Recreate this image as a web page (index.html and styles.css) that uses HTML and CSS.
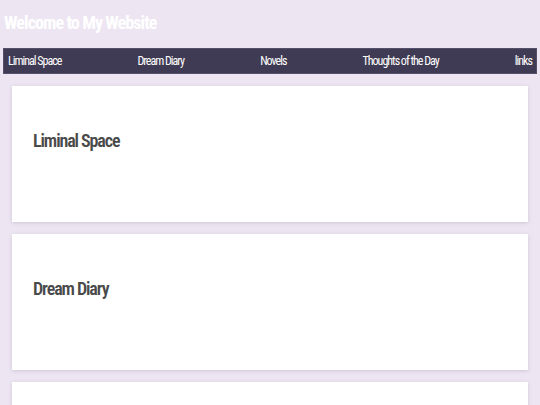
FILE: index.html
```html
<!DOCTYPE html>
<html>
<head>
<meta charset="utf-8">
<link rel="stylesheet" href="styles.css">
</head>
<body>
<header class="site-header">
  <h1 class="site-title">Welcome to My Website</h1>
</header>
<nav class="main-nav">
  <a href="#">Liminal Space</a>
  <a href="#">Dream Diary</a>
  <a href="#">Novels</a>
  <a href="#">Thoughts of the Day</a>
  <a href="#">links</a>
</nav>
<main class="sections">
  <section class="card"><h2 class="card-title">Liminal Space</h2></section>
  <section class="card"><h2 class="card-title">Dream Diary</h2></section>
  <section class="card"><h2 class="card-title">Novels</h2></section>
</main>
</body>
</html>
```
FILE: styles.css
```css
html, body {
  margin: 0;
  padding: 0;
}
body {
  background: #ede6f2;
  font-family: Roboto, "Liberation Sans", sans-serif;
  font-stretch: 75%;
  padding: 0 3px;
  height: 405px;
  overflow: hidden;
}
.site-header {
  height: 48px;
  display: flex;
  align-items: center;
}
.site-title {
  margin: 0 0 2px 1px;
  font-size: 18px;
  line-height: 20px;
  font-weight: bold;
  color: #ffffff;
  letter-spacing: -0.9px;
}
.main-nav {
  display: flex;
  justify-content: space-between;
  align-items: center;
  height: 24px;
  background: #3f3b54;
  border: 1px solid #55506a;
  padding: 0 4px 0 4px;
}
.main-nav a {
  color: #ffffff;
  text-decoration: none;
  font-size: 12px;
  letter-spacing: -1px;
}
.sections {
  display: flex;
  flex-direction: column;
  gap: 12px;
  padding: 12px 9px;
}
.card {
  flex: none;
  background: #ffffff;
  height: 136px;
  box-sizing: border-box;
  padding: 45px 21px 0;
  box-shadow: 0 1px 4px rgba(120, 100, 140, 0.25);
}
.card-title {
  margin: 0;
  font-size: 18px;
  line-height: 20px;
  font-weight: 600;
  color: #4a4a4a;
  letter-spacing: -1.1px;
}
```
